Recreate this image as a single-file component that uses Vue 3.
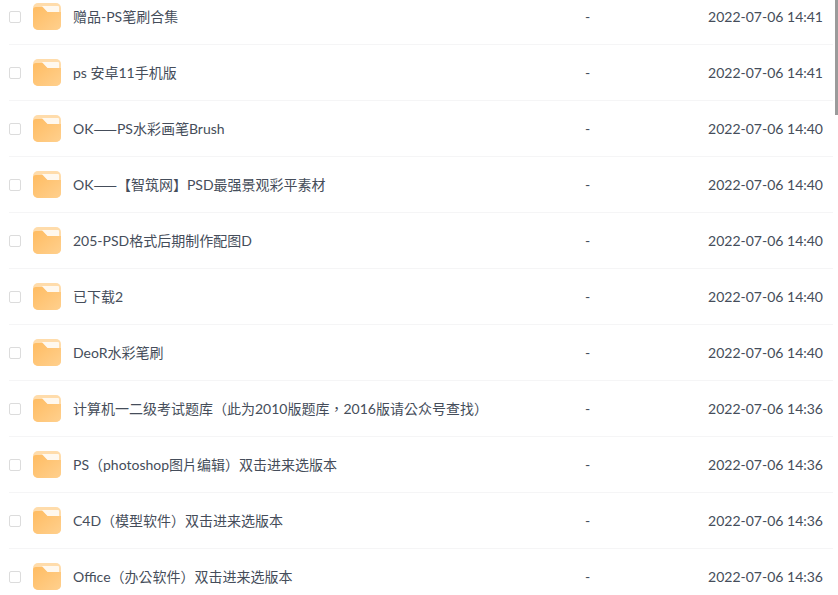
<template>
  <div class="page">
    <div class="list">
      <div v-for="item in items" :key="item.name" class="row">
        <span class="check"></span>
        <svg class="folder" width="28" height="27" viewBox="0 0 28 27">
          <defs>
            <linearGradient id="body" x1="0" y1="0" x2="1" y2="1">
              <stop offset="0" stop-color="#ffbc62" />
              <stop offset="1" stop-color="#ffd08e" />
            </linearGradient>
          </defs>
          <rect width="28" height="27" rx="5" fill="#ffdcab" />
          <path d="M9 3h16a1 1 0 0 1 1 1v5H14z" fill="#fff8ee" />
          <path d="M0 7a3 3 0 0 1 3-3h6.500l5 5H28v13a5 5 0 0 1-5 5H5a5 5 0 0 1-5-5z" fill="url(#body)" />
        </svg>
        <span class="name">
          <span
            v-for="(part, i) in splitDash(item.name)"
            :key="i"
            :class="{ dash: part === '——' }"
          >{{ part }}</span>
        </span>
        <span class="size">-</span>
        <span class="time">{{ item.time }}</span>
      </div>
    </div>
    <div class="scroll-thumb"></div>
  </div>
</template>

<script setup>
const items = [
  { name: '赠品-PS笔刷合集', time: '2022-07-06 14:41' },
  { name: 'ps 安卓11手机版', time: '2022-07-06 14:41' },
  { name: 'OK——PS水彩画笔Brush', time: '2022-07-06 14:40' },
  { name: 'OK——【智筑网】PSD最强景观彩平素材', time: '2022-07-06 14:40' },
  { name: '205-PSD格式后期制作配图D', time: '2022-07-06 14:40' },
  { name: '已下载2', time: '2022-07-06 14:40' },
  { name: 'DeoR水彩笔刷', time: '2022-07-06 14:40' },
  { name: '计算机一二级考试题库（此为2010版题库，2016版请公众号查找）', time: '2022-07-06 14:36' },
  { name: 'PS（photoshop图片编辑）双击进来选版本', time: '2022-07-06 14:36' },
  { name: 'C4D（模型软件）双击进来选版本', time: '2022-07-06 14:36' },
  { name: 'Office（办公软件）双击进来选版本', time: '2022-07-06 14:36' }
]

// Lato's em dash is short, the double dash has to come from the CJK font
const splitDash = (name) => name.split(/(——)/)
</script>

<style>
html,
body {
  margin: 0;
  background: #fff;
  overflow: hidden;
}
</style>

<style scoped>
.page {
  position: relative;
  width: 838px;
  height: 595px;
  overflow: hidden;
  font-family: Lato, "Noto Sans CJK TC", sans-serif;
  font-size: 14px;
  line-height: 20px;
  color: #454d5a;
}

.list {
  margin-top: -11px;
  padding-left: 9px;
  width: 824px;
}

.row {
  display: flex;
  align-items: center;
  height: 55px;
  border-bottom: 1px solid #f5f5f6;
}

.check {
  flex: none;
  width: 10px;
  height: 10px;
  border: 1px solid #dcdcdc;
  border-radius: 2px;
}

.folder {
  flex: none;
  margin-left: 12px;
}

.name {
  flex: none;
  width: 512px;
  margin-left: 12px;
  white-space: nowrap;
}

.dash {
  font-family: "Noto Sans CJK TC", sans-serif;
}

.size {
  flex: none;
  width: 50px;
}

.time {
  flex: 1;
  padding-right: 10px;
  text-align: right;
  white-space: nowrap;
}

.scroll-thumb {
  position: absolute;
  top: 0;
  right: 0;
  width: 3px;
  height: 115px;
  background: #9b9b9b;
}
</style>
